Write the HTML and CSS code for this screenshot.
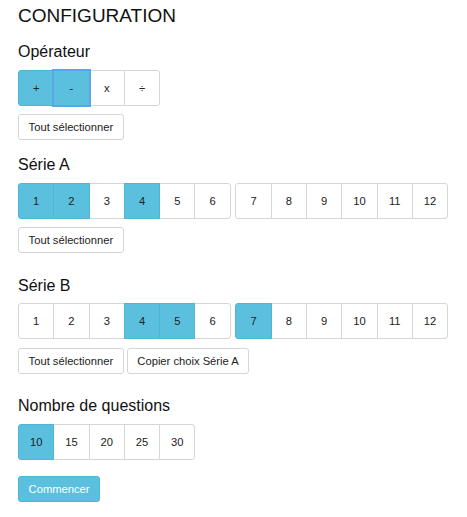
FILE: index.html
```html
<!DOCTYPE html>
<html lang="fr">
<head>
<meta charset="utf-8">
<title>Configuration</title>
<link rel="stylesheet" href="styles.css">
</head>
<body>
<div class="page">
  <h1 class="title">CONFIGURATION</h1>

  <section class="section">
    <h2 class="label">Opérateur</h2>
    <div class="groups">
      <div class="group">
        <button class="opt active">+</button>
        <button class="opt active focus">-</button>
        <button class="opt">x</button>
        <button class="opt">÷</button>
      </div>
    </div>
    <div class="actions">
      <button class="btn">Tout sélectionner</button>
    </div>
  </section>

  <section class="section">
    <h2 class="label">Série A</h2>
    <div class="groups">
      <div class="group">
        <button class="opt active">1</button>
        <button class="opt active">2</button>
        <button class="opt">3</button>
        <button class="opt active">4</button>
        <button class="opt">5</button>
        <button class="opt">6</button>
      </div>
      <div class="group">
        <button class="opt">7</button>
        <button class="opt">8</button>
        <button class="opt">9</button>
        <button class="opt">10</button>
        <button class="opt">11</button>
        <button class="opt">12</button>
      </div>
    </div>
    <div class="actions">
      <button class="btn">Tout sélectionner</button>
    </div>
  </section>

  <section class="section wide">
    <h2 class="label">Série B</h2>
    <div class="groups">
      <div class="group">
        <button class="opt">1</button>
        <button class="opt">2</button>
        <button class="opt">3</button>
        <button class="opt active">4</button>
        <button class="opt active">5</button>
        <button class="opt">6</button>
      </div>
      <div class="group">
        <button class="opt active">7</button>
        <button class="opt">8</button>
        <button class="opt">9</button>
        <button class="opt">10</button>
        <button class="opt">11</button>
        <button class="opt">12</button>
      </div>
    </div>
    <div class="actions">
      <button class="btn">Tout sélectionner</button>
      <button class="btn">Copier choix Série A</button>
    </div>
  </section>

  <section class="section wide">
    <h2 class="label">Nombre de questions</h2>
    <div class="groups">
      <div class="group">
        <button class="opt active">10</button>
        <button class="opt">15</button>
        <button class="opt">20</button>
        <button class="opt">25</button>
        <button class="opt">30</button>
      </div>
    </div>
    <div class="actions start">
      <button class="btn primary">Commencer</button>
    </div>
  </section>
</div>
</body>
</html>
```

FILE: styles.css
```css
* {
  box-sizing: border-box;
}

html, body {
  margin: 0;
  padding: 0;
  background: #fff;
}

body {
  font-family: "Liberation Sans", Arial, Helvetica, sans-serif;
  color: #333;
}

.page {
  padding: 5px 18px 0 18px;
  display: flex;
  flex-direction: column;
}

.title {
  margin: 0;
  font-size: 19px;
  line-height: 22px;
  font-weight: normal;
  color: #111;
}

.section {
  margin-top: 16px;
  display: flex;
  flex-direction: column;
}

.section.wide {
  margin-top: 23.6px;
}

.label {
  margin: 0;
  font-size: 16px;
  line-height: 18px;
  font-weight: normal;
  color: #111;
}

.groups {
  margin-top: 8.5px;
  display: flex;
  gap: 4.6px;
}

.group {
  display: flex;
}

.opt {
  position: relative;
  width: 36.3px;
  height: 36px;
  margin: 0;
  padding: 0;
  font-family: inherit;
  font-size: 11.2px;
  color: #222;
  background: #fff;
  border: 1px solid #d6d6d6;
  border-radius: 0;
}

.opt + .opt {
  margin-left: -1px;
}

.opt:first-child {
  border-top-left-radius: 3px;
  border-bottom-left-radius: 3px;
}

.opt:last-child {
  border-top-right-radius: 3px;
  border-bottom-right-radius: 3px;
}

.opt.active {
  background: #5bc0de;
  border-color: #4fb5d4;
  z-index: 1;
}

.opt.focus {
  z-index: 2;
  outline: 2px solid #5aa6ee;
  outline-offset: -1px;
}

.actions {
  margin-top: 8.5px;
  display: flex;
  gap: 3px;
}

.actions.start {
  margin-top: 16px;
}

.btn {
  height: 26px;
  margin: 0;
  padding: 0 9.6px;
  font-family: inherit;
  font-size: 11.2px;
  color: #222;
  background: #fff;
  border: 1px solid #d6d6d6;
  border-radius: 3px;
}

.btn.primary {
  background: #5bc0de;
  border-color: #4fb5d4;
  color: #fff;
}
```
